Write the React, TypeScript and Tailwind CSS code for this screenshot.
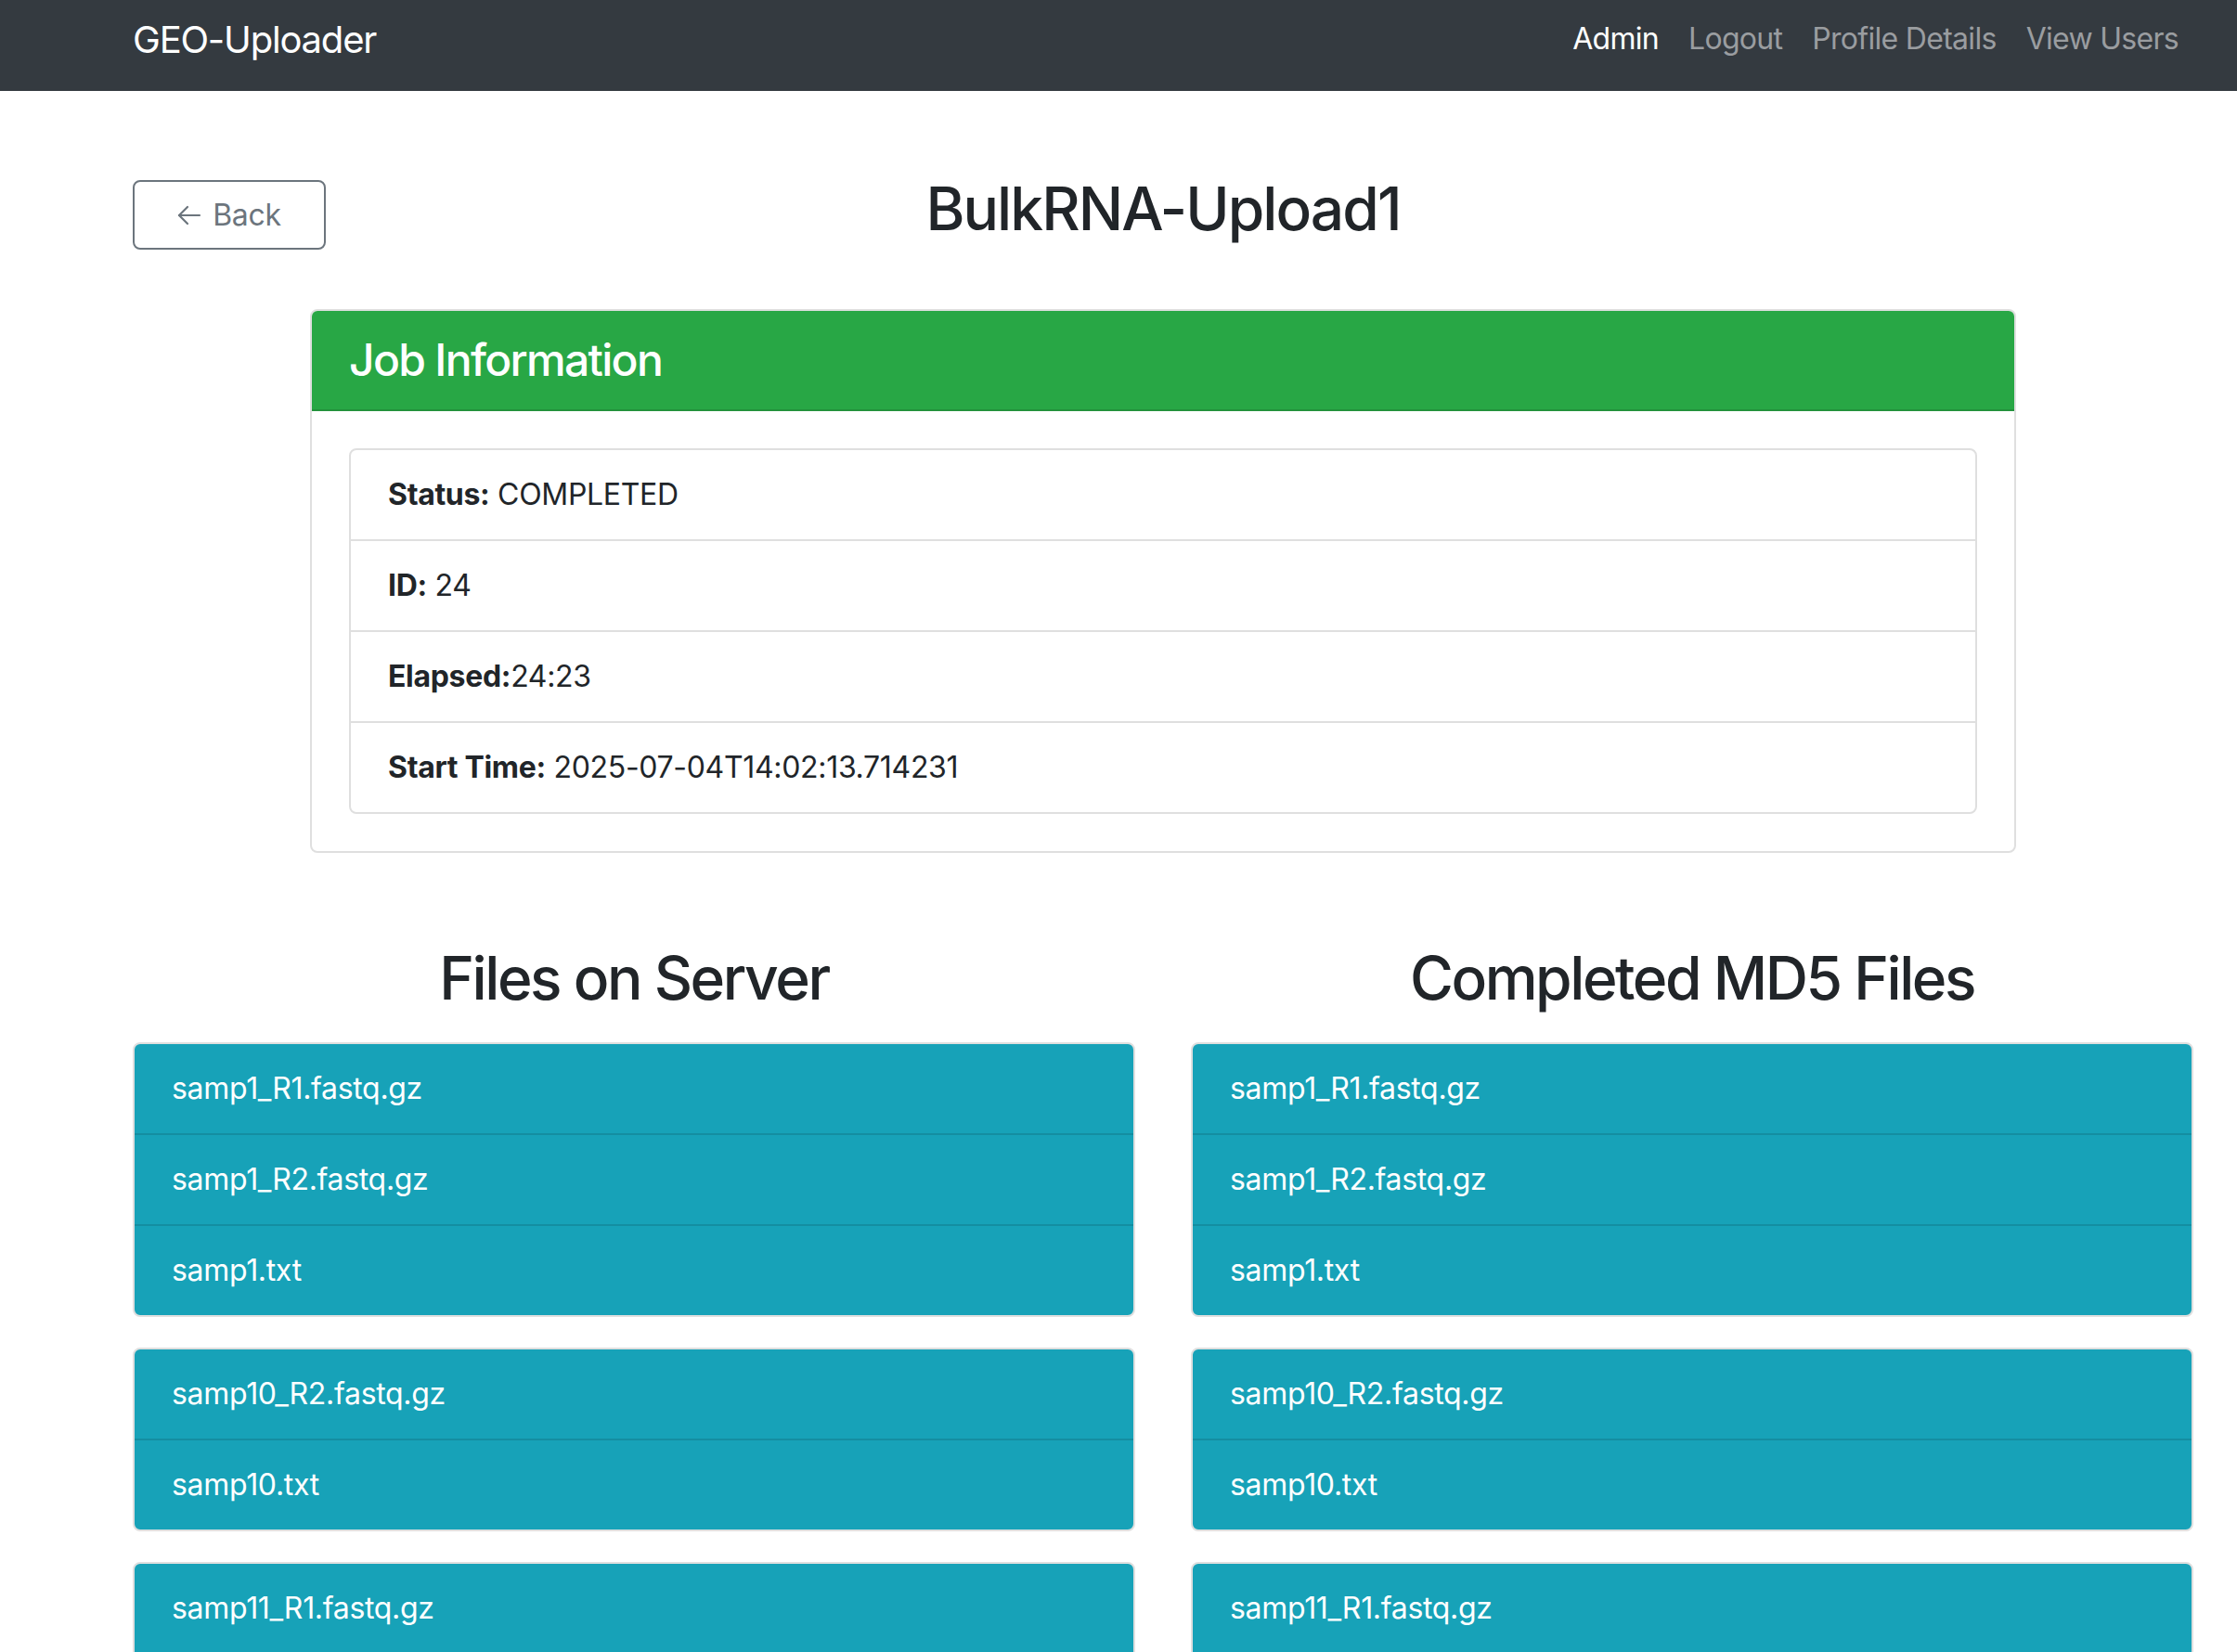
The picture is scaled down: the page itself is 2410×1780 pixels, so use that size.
import React from 'react';

type FileGroup = string[];

const serverFiles: FileGroup[] = [
  ['samp1_R1.fastq.gz', 'samp1_R2.fastq.gz', 'samp1.txt'],
  ['samp10_R2.fastq.gz', 'samp10.txt'],
  ['samp11_R1.fastq.gz', 'samp11_R2.fastq.gz', 'samp11.txt'],
];

const md5Files: FileGroup[] = [
  ['samp1_R1.fastq.gz', 'samp1_R2.fastq.gz', 'samp1.txt'],
  ['samp10_R2.fastq.gz', 'samp10.txt'],
  ['samp11_R1.fastq.gz', 'samp11_R2.fastq.gz', 'samp11.txt'],
];

const jobInfo = [
  { label: 'Status:', value: ' COMPLETED' },
  { label: 'ID:', value: ' 24' },
  { label: 'Elapsed:', value: '24:23' },
  { label: 'Start Time:', value: ' 2025-07-04T14:02:13.714231' },
];

function FileColumn({ title, groups }: { title: string; groups: FileGroup[] }) {
  return (
    <section>
      <h2 className="text-center text-[64px] font-medium leading-[1.2] tracking-[-0.038em] mb-[31px]">{title}</h2>
      <div className="flex flex-col gap-[33px]">
        {groups.map((group, i) => (
          <ul
            key={i}
            className="border-2 border-[#dfdfdf] rounded-[8px] overflow-hidden bg-[#17a2b8] divide-y-2 divide-[#148ea1]"
          >
            {group.map(name => (
              <li key={name} className="px-[40px] py-[24px] text-[32px] leading-[48px] tracking-[-0.01em] text-white">
                {name}
              </li>
            ))}
          </ul>
        ))}
      </div>
    </section>
  );
}

export default function App() {
  return (
    <div className="min-h-screen w-[2410px] bg-white text-[#212529] font-['Inter','Noto_Sans',sans-serif] overflow-hidden">
      {/* Navbar */}
      <nav className="h-[98px] bg-[#343a40] pl-[143px]">
        <div className="w-[2220px] flex items-start justify-between">
          <a className="mt-[13px] text-[40px] leading-[60px] tracking-[-0.03em] text-white">GEO-Uploader</a>
          <ul className="mt-[18px] flex text-[32px] leading-[48px] tracking-[-0.022em]">
            <li className="px-[16px] text-white">Admin</li>
            <li className="px-[16px] text-[#9a9da0]">Logout</li>
            <li className="px-[16px] text-[#9a9da0]">Profile Details</li>
            <li className="px-[16px] text-[#9a9da0]">View Users</li>
          </ul>
        </div>
      </nav>

      <main className="pl-[143px] pb-[80px]">
        <div className="w-[2220px]">
          {/* Title row */}
          <div className="grid grid-cols-[1fr_auto_1fr] items-start pt-[89px]">
            <div>
              <button className="mt-[7px] h-[75px] w-[208px] justify-center border-2 border-[#6c757d] rounded-[8px] text-[#6c757d] text-[32px] leading-[48px] tracking-[-0.01em] flex items-center gap-[12px]">
                <svg width="26" height="22" viewBox="0 0 26 22" fill="none" stroke="currentColor" strokeWidth="2.2" strokeLinecap="round" strokeLinejoin="round">
                  <path d="M24 11H2" />
                  <path d="M11 2 2 11l9 9" />
                </svg>
                <span>Back</span>
              </button>
            </div>
            <h1 className="text-[64px] font-medium leading-[1.2] tracking-[-0.03em]">BulkRNA-Upload1</h1>
            <div />
          </div>

          {/* Job Information card */}
          <div className="mt-[64px] mx-[191px] border-2 border-[#dfdfdf] rounded-[8px] overflow-hidden">
            <div className="bg-[#28a745] border-b-2 border-[#23923c] px-[40px] py-[24px]">
              <h4 className="text-[48px] font-medium leading-[1.2] tracking-[-0.035em] text-white">Job Information</h4>
            </div>
            <div className="p-[40px]">
              <ul className="border-2 border-[#dfdfdf] rounded-[8px] divide-y-2 divide-[#dfdfdf]">
                {jobInfo.map(row => (
                  <li key={row.label} className="px-[40px] py-[24px] text-[32px] leading-[48px] tracking-[-0.01em] whitespace-pre">
                    <strong className="font-bold">{row.label}</strong>
                    {row.value}
                  </li>
                ))}
              </ul>
            </div>
          </div>

          {/* File lists */}
          <div className="mt-[97px] grid grid-cols-2 gap-x-[60px]">
            <FileColumn title="Files on Server" groups={serverFiles} />
            <FileColumn title="Completed MD5 Files" groups={md5Files} />
          </div>
        </div>
      </main>
    </div>
  );
}
